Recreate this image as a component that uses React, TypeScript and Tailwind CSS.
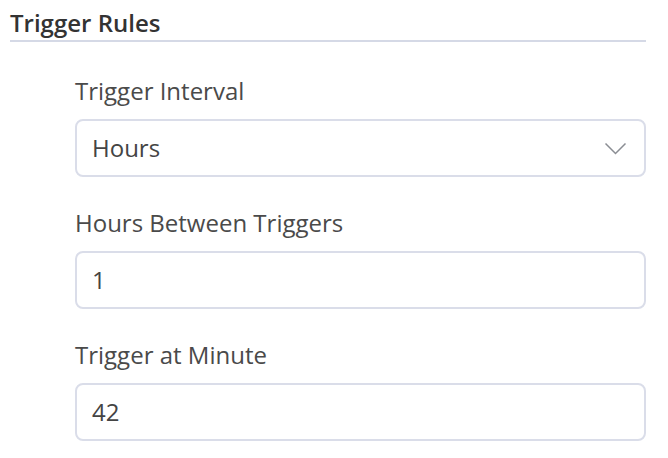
const Field = ({ label, value, select }: { label: string; value: string; select?: boolean }) => (
  <div className="flex flex-col">
    <label className="text-[24px] leading-[32px] text-[#4a4a4a] mb-[12px]">{label}</label>
    <div className="h-[58px] w-full rounded-[8px] border-2 border-[#dadde9] bg-white flex items-center justify-between pl-[15px] pr-[17px]">
      <span className="text-[24px] text-[#444444]">{value}</span>
      {select && (
        <svg width="23" height="13" viewBox="0 0 23 13" fill="none" stroke="#8a8d93" strokeWidth="1.5">
          <path d="M1.5 1.5l10 10 10-10" />
        </svg>
      )}
    </div>
  </div>
);

export default function App() {
  return (
    <div className="w-[668px] h-[458px] bg-white overflow-hidden" style={{ fontFamily: '"Open Sans", sans-serif' }}>
      <div className="pl-[10px] pr-[22px] pt-[7px]">
        <h2 className="text-[24px] leading-[32px] font-semibold text-[#333333] pb-[1px] border-b-2 border-[#d5d9e6]">Trigger Rules</h2>
      </div>
      <div className="pl-[75px] pr-[22px] pt-[33px] flex flex-col gap-[30px]">
        <Field label="Trigger Interval" value="Hours" select />
        <Field label="Hours Between Triggers" value="1" />
        <Field label="Trigger at Minute" value="42" />
      </div>
    </div>
  );
}
